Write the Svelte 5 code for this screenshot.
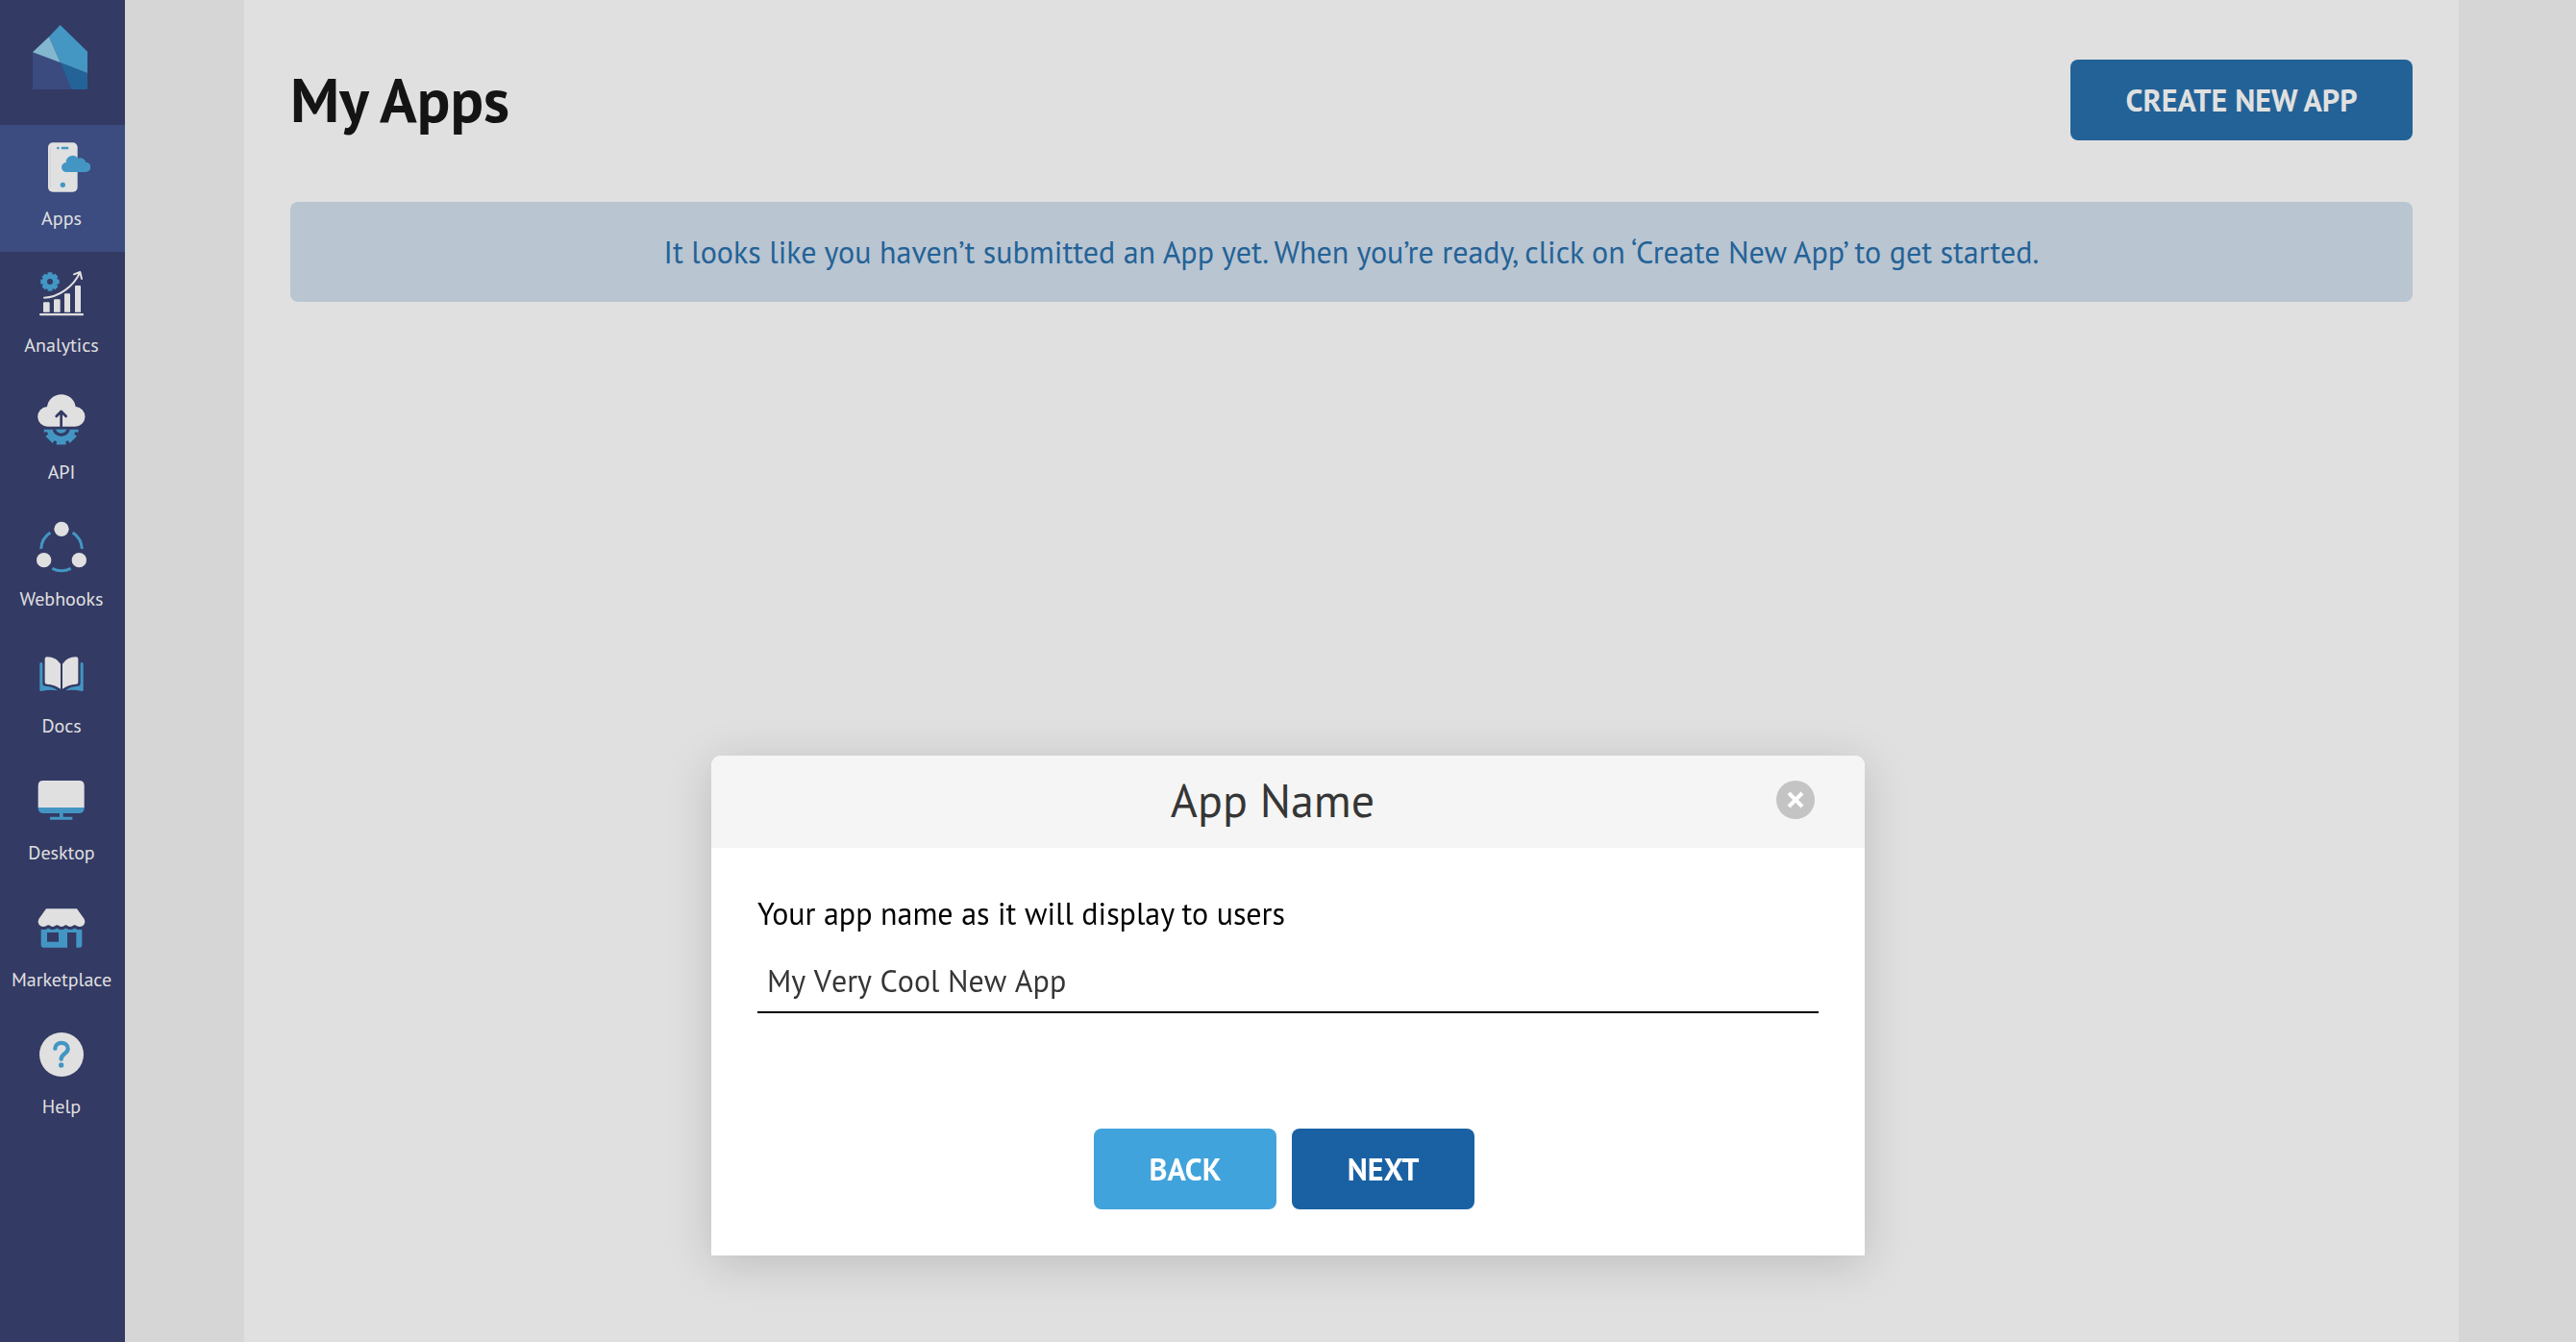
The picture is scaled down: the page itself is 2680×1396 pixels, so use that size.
<script>
  let appName = $state('My Very Cool New App');
  const items = ['Apps', 'Analytics', 'API', 'Webhooks', 'Docs', 'Desktop', 'Marketplace', 'Help'];
  const boxes = {
    Apps: '102 432 180 180',
    Analytics: '102 48 180 180',
    API: '102 444 180 180',
    Webhooks: '102 60 180 180',
    Docs: '102 456 180 180',
    Desktop: '102 72 180 180',
    Marketplace: '102 468 180 180',
    Help: '102 84 180 180'
  };

  // Outline of an eight-toothed gear around (cx, cy).
  function gear(cx, cy, outer, inner, half) {
    const points = [];
    for (let i = 0; i < 8; i++) {
      const a = (i * Math.PI) / 4;
      for (const [r, d] of [[inner, -half * 1.1], [outer, -half], [outer, half], [inner, half * 1.1]]) {
        points.push(`${(cx + r * Math.cos(a + d)).toFixed(1)} ${(cy + r * Math.sin(a + d)).toFixed(1)}`);
      }
    }
    return `M${points.join('L')}Z`;
  }
  const smallGear = gear(156, 99, 30, 25, 0.25);
  const largeGear = gear(191, 554, 56, 46, 0.28);
</script>

<div class="page">
  <aside class="sidebar">
    <a class="logo" href="#home" aria-label="Home">
      <svg viewBox="102 78 171 201" width="57" height="67" aria-hidden="true">
        <path fill="#3b4b80" d="M102 163L188 195L223 279H102Z" />
        <path fill="#246397" d="M188 195L273 228V279H223Z" />
        <path fill="#4496c3" d="M188 78L273 161V228L188 195L153 115Z" />
        <path fill="#83b7d0" d="M153 115L188 195L102 163Z" />
      </svg>
    </a>
    <nav>
      {#each items as item}
        <a class="item" class:active={item === 'Apps'} href={'#' + item.toLowerCase()}>
          <svg viewBox={boxes[item]} width="60" height="60" aria-hidden="true">
            {#if item === 'Apps'}
              <rect class="light" x="150" y="445" width="92" height="154" rx="15" />
              <path stroke="#c9cbda" stroke-width="2" d="M157 460V584" />
              <circle class="blue" cx="181" cy="462" r="4" />
              <rect class="blue" x="191" y="458" width="23" height="8" rx="3" />
              <circle class="blue" cx="196" cy="577" r="8" />
              <path class="blue" d="M208 537A15 15 0 0 1 206 507A21 21 0 0 1 244 494A18 18 0 0 1 268 506A15.500 15.500 0 0 1 267 537Z" />
            {:else if item === 'Analytics'}
              <path class="blue" d={smallGear} />
              <circle class="navy" cx="156" cy="99" r="9" />
              <path class="light" d="M138 163H152Q155 163 155 166V194H135V166Q135 163 138 163ZM171 154H185Q188 154 188 157V194H168V157Q168 154 171 154ZM204 136H216Q219 136 219 139V194H201V139Q201 136 204 136ZM237 111H249Q252 111 252 114V194H234V114Q234 111 237 111Z" />
              <rect class="light" x="123" y="198" width="138" height="7" rx="3" />
              <path class="line" stroke-width="6" d="M138 149C180 149 230 115 249 71M231 76L250 69L255 90" />
            {:else if item === 'API'}
              <path class="light" d="M150 551A31 31 0 0 1 147 489A45 45 0 0 1 236 489A31 31 0 0 1 233 551Z" />
              <path class="arrow" d="M191 510V556M176 519L191 504L206 519" />
              <clipPath id="lower-half"><rect x="120" y="560" width="150" height="60" /></clipPath>
              <g clip-path="url(#lower-half)">
                <path class="blue" d={largeGear} />
                <circle class="navy" cx="191" cy="554" r="28" />
                <circle class="blue" cx="191" cy="554" r="18" />
              </g>
            {:else if item === 'Webhooks'}
              <circle class="light" cx="192" cy="91" r="23" />
              <circle class="light" cx="137" cy="188" r="23" />
              <circle class="light" cx="247" cy="188" r="23" />
              <path class="arc" d="M157 102A65 65 0 0 0 128 153M227 102A65 65 0 0 1 256 153M163 214A65 65 0 0 0 221 214" />
            {:else if item === 'Docs'}
              <path class="light" d="M140 496Q140 490 147 490Q176 491 189 512V590Q171 576 147 575Q140 575 140 569ZM244 496Q244 490 237 490Q208 491 195 512V590Q213 576 237 575Q244 575 244 569Z" />
              <path class="blue" d="M126 508Q133 505 133 512V572Q133 581 142 581Q165 582 180 595Q158 591 127 597Q124 597 124 594V511ZM258 508Q251 505 251 512V572Q251 581 242 581Q219 582 204 595Q226 591 257 597Q260 597 260 594V511Z" />
            {:else if item === 'Desktop'}
              <path class="light" d="M119 181V112Q119 96 135 96H247Q263 96 263 112V181Z" />
              <path class="blue" d="M119 180H263Q263 198 246 198H197V209H226V218H156V209H186V198H136Q119 198 119 180Z" />
            {:else if item === 'Marketplace'}
              <path class="light" d="M144 496H240L263 528Q268 537 262 546Q253 555 240 550Q233 544 226 550Q219 554 212 550Q206 544 199 550Q192 554 185 550Q178 544 171 550Q164 554 158 550Q151 544 144 550Q131 555 122 546Q116 537 121 528Z" />
              <path class="blue" fill-rule="evenodd" d="M128 561H143Q151 554 159 561H170Q178 554 186 561H198Q206 554 214 561H225Q233 554 241 561H256V610Q256 617 249 617H238V570H210V617H135Q128 617 128 610ZM147 570H183V599H147Z" />
            {:else}
              <circle class="light" cx="192" cy="171" r="69" />
              <path class="query" d="M172 152C172 129 212 129 212 153C212 168 191 168 191 185" />
              <circle class="blue" cx="191" cy="204" r="8" />
            {/if}
          </svg>
          <span>{item}</span>
        </a>
      {/each}
    </nav>
  </aside>

  <div class="gutter">
    <main class="panel">
      <header class="top">
        <h1>My Apps</h1>
        <button class="btn create" type="button">CREATE NEW APP</button>
      </header>
      <p class="notice">It looks like you haven’t submitted an App yet. When you’re ready, click on ‘Create New App’ to get started.</p>
    </main>
  </div>
</div>

<div class="overlay">
  <div class="modal" role="dialog" aria-modal="true" aria-labelledby="modal-title">
    <header class="modal-head">
      <h2 id="modal-title">App Name</h2>
      <button class="close" type="button" aria-label="Close">
        <svg viewBox="0 0 40 40" width="40" height="40" aria-hidden="true">
          <circle cx="20" cy="20" r="20" fill="#c4c4c4" />
          <path d="M13 13L27 27M27 13L13 27" stroke="#fff" stroke-width="4" />
        </svg>
      </button>
    </header>
    <form class="modal-body" onsubmit={(e) => e.preventDefault()}>
      <label for="app-name">Your app name as it will display to users</label>
      <input id="app-name" type="text" bind:value={appName} />
      <div class="actions">
        <button class="btn back" type="button">BACK</button>
        <button class="btn next" type="submit">NEXT</button>
      </div>
    </form>
  </div>
</div>

<style>
  :global(body) {
    margin: 0;
    background: #d6d6d6;
    font-family: 'PT Sans', Lato, 'Liberation Sans', sans-serif;
    font-size: 32px;
    line-height: 40px;
  }
  .page {
    display: flex;
    min-height: 100vh;
  }
  .sidebar {
    flex: none;
    width: 130px;
    background: #333a64;
  }
  .logo {
    display: block;
    box-sizing: border-box;
    height: 130px;
    padding: 26px 0 0 34px;
  }
  svg {
    display: block;
    fill: none;
  }
  .item {
    display: flex;
    flex-direction: column;
    align-items: center;
    gap: 11px;
    box-sizing: border-box;
    height: 132px;
    padding: 14px 2px 0 0;
    color: #e0e0e0;
    font-size: 20px;
    line-height: 24px;
    text-decoration: none;
  }
  .active {
    background: #3c4c80;
  }
  .light {
    fill: #e0e0e0;
  }
  .blue {
    fill: #4396c3;
  }
  .navy {
    fill: #333a64;
  }
  .line {
    stroke: #e0e0e0;
    stroke-linecap: round;
    stroke-linejoin: round;
  }
  .arrow {
    stroke: #333a64;
    stroke-width: 8;
    stroke-linecap: round;
    stroke-linejoin: round;
  }
  .arc {
    stroke: #4396c3;
    stroke-width: 9;
  }
  .query {
    stroke: #4396c3;
    stroke-width: 13;
    stroke-linecap: round;
  }
  .gutter {
    display: flex;
    flex: 1;
    padding: 0 122px 0 124px;
  }
  .panel {
    flex: 1;
    padding: 62px 48px;
    background: #e0e0e0;
  }
  .top {
    display: flex;
    align-items: center;
    justify-content: space-between;
    margin-bottom: 64px;
  }
  h1 {
    margin: 0;
    color: #141414;
    font-size: 64px;
    line-height: 84px;
    font-weight: 700;
  }
  .btn {
    height: 84px;
    padding: 0;
    border: 0;
    border-radius: 8px;
    color: #fff;
    font: inherit;
    font-weight: 700;
  }
  .create {
    width: 356px;
    background: #236297;
    color: #e0e0e0;
  }
  .notice {
    margin: 0;
    padding: 32px;
    border-radius: 8px;
    background: #b9c5d1;
    color: #236297;
    text-align: center;
  }
  .overlay {
    position: fixed;
    inset: 0;
    display: flex;
    align-items: flex-end;
    justify-content: center;
    padding-bottom: 90px;
  }
  .modal {
    width: 1200px;
    max-width: 100%;
    border-radius: 10px 10px 0 0;
    background: #fff;
    box-shadow: 0 8px 48px rgba(0, 0, 0, 0.16);
  }
  .modal-head {
    display: flex;
    align-items: center;
    box-sizing: border-box;
    height: 96px;
    padding: 0 52px 4px 60px;
    border-radius: 10px 10px 0 0;
    background: #f5f5f5;
  }
  h2 {
    flex: 1;
    margin: 0;
    color: #363636;
    font-size: 48px;
    line-height: 60px;
    font-weight: 400;
    text-align: center;
  }
  .close {
    padding: 0;
    border: 0;
    background: none;
  }
  .modal-body {
    display: flex;
    flex-direction: column;
    padding: 48px;
  }
  label {
    margin-bottom: 16px;
    color: #000;
  }
  input {
    box-sizing: border-box;
    height: 68px;
    padding: 2px 10px 0;
    border: 0;
    border-bottom: 2px solid #000;
    outline: 0;
    background: none;
    color: #363636;
    font: inherit;
    font-kerning: none;
  }
  .actions {
    display: flex;
    justify-content: center;
    gap: 16px;
    margin-top: 120px;
    padding-right: 8px;
  }
  .back,
  .next {
    width: 190px;
  }
  .back {
    background: #41a3db;
  }
  .next {
    background: #1961a3;
  }
</style>
